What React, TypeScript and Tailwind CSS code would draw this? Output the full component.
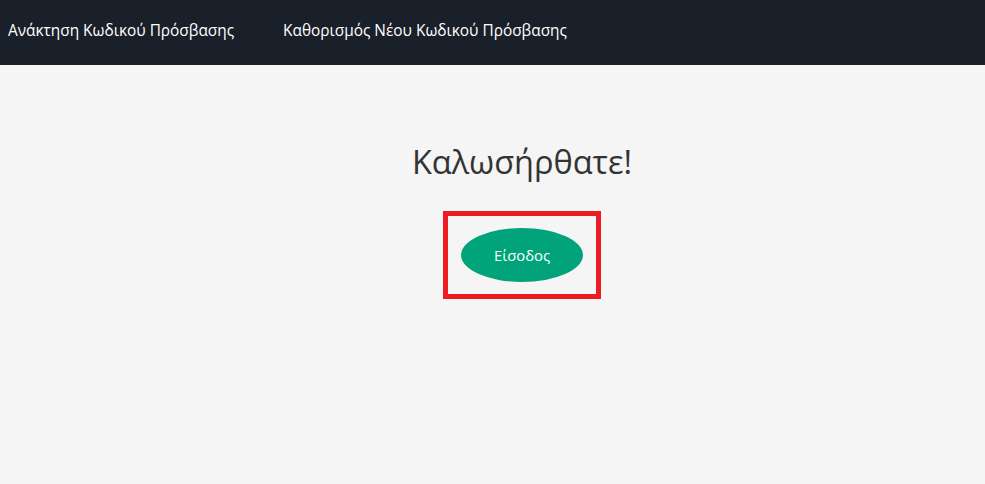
export default function App() {
  return (
    <div className="min-h-[484px] w-full bg-[#f5f5f5] font-['Open_Sans','Noto_Sans',sans-serif]">
      <nav className="flex h-[65px] items-center gap-[49px] bg-[#19202a] px-2 pb-1 text-[15.4px] text-white">
        <a href="#">Ανάκτηση Κωδικού Πρόσβασης</a>
        <a href="#">Καθορισμός Νέου Κωδικού Πρόσβασης</a>
      </nav>

      <main className="flex flex-col items-center pl-[59px] pt-[75px]">
        <h1 className="text-[32.5px] leading-[44px] text-[#333333]">Καλωσήρθατε!</h1>
        <div className="mt-[27px] border-[5px] border-[#ec1c24] px-[13px] py-[12px]">
          <button className="flex h-[54px] w-[122px] items-center justify-center rounded-[50%] bg-[#00a37a] text-[14.8px] text-white">
            Είσοδος
          </button>
        </div>
      </main>
    </div>
  );
}
